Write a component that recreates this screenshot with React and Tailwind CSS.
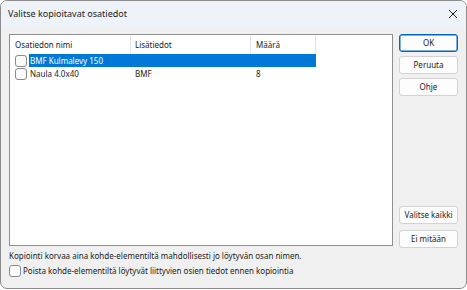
import React from "react";

const font = { fontFamily: '"Noto Sans", "Segoe UI", sans-serif' };

function Box() {
  return <span className="inline-block w-[12px] h-[12px] rounded-[3px] border border-[#8a8a8a] bg-[#fbfbfb] shrink-0" />;
}

function Btn({ children, primary }) {
  return (
    <div
      className={
        "h-[18px] w-[59px] flex items-center justify-center rounded-[3px] bg-[#fdfdfd] text-[8px] text-[#1b1b1b] " +
        (primary ? "border border-[#0067c0] shadow-[inset_0_0_0_0.5px_#0067c0]" : "border border-[#d3d3d3]")
      }
    >
      {children}
    </div>
  );
}

export default function App() {
  return (
    <div className="w-[467px] h-[290px] bg-white" style={font}>
      <div className="w-full h-[289px] rounded-[7px] border border-[#8c8c8c] bg-[#f0f0f0] overflow-hidden flex flex-col">
        <div className="h-[26px] shrink-0 bg-[#eef3f9] flex items-center justify-between pl-[7px] pr-[6px]">
          <span className="text-[9px] text-[#1a1a1a]">Valitse kopioitavat osatiedot</span>
          <svg width="10" height="10" viewBox="0 0 10 10" className="mr-[2px]">
            <path d="M1 1 L9 9 M9 1 L1 9" stroke="#222" strokeWidth="1" />
          </svg>
        </div>
        <div className="flex-1 flex flex-col pl-[8px] pr-[8px] pt-[7px]">
          <div className="flex gap-[6px]">
            <div className="w-[384px] h-[212px] border border-[#8e8f8f] bg-white text-[8px] text-[#1b1b1b]">
              <div className="flex h-[19px] items-stretch">
                <div className="w-[121px] border-r border-[#e5e5e5] flex items-center pl-[5px]">Osatiedon nimi</div>
                <div className="w-[120px] border-r border-[#e5e5e5] flex items-center pl-[4px]">Lisätiedot</div>
                <div className="w-[65px] border-r border-[#e5e5e5] flex items-center pl-[5px]">Määrä</div>
              </div>
              <div className="flex h-[13px] items-center">
                <div className="w-[19px] pl-[5px] flex items-center"><Box /></div>
                <div className="w-[287px] h-[13px] bg-[#0078d7] text-white flex items-center pl-[1px]">BMF Kulmalevy 150</div>
              </div>
              <div className="flex h-[13px] items-center">
                <div className="w-[19px] pl-[5px] flex items-center"><Box /></div>
                <div className="w-[102px] pl-[1px]">Naula 4.0x40</div>
                <div className="w-[120px] pl-[4px]">BMF</div>
                <div className="w-[65px] pl-[5px]">8</div>
              </div>
            </div>
            <div className="flex flex-col">
              <div className="flex flex-col gap-[4px]">
                <Btn primary>OK</Btn>
                <Btn>Peruuta</Btn>
                <Btn>Ohje</Btn>
              </div>
              <div className="flex-1" />
              <div className="flex flex-col gap-[6px] mb-[-2px]">
                <Btn>Valitse kaikki</Btn>
                <Btn>Ei mitään</Btn>
              </div>
            </div>
          </div>
          <div className="mt-[3px] text-[8px] text-[#1b1b1b] h-[14px] flex items-center">
            Kopiointi korvaa aina kohde-elementiltä mahdollisesti jo löytyvän osan nimen.
          </div>
          <div className="mt-[1px] flex items-center gap-[2px] text-[8px] text-[#1b1b1b] h-[14px]">
            <Box />
            <span>Poista kohde-elementiltä löytyvät liittyvien osien tiedot ennen kopiointia</span>
          </div>
        </div>
      </div>
    </div>
  );
}
